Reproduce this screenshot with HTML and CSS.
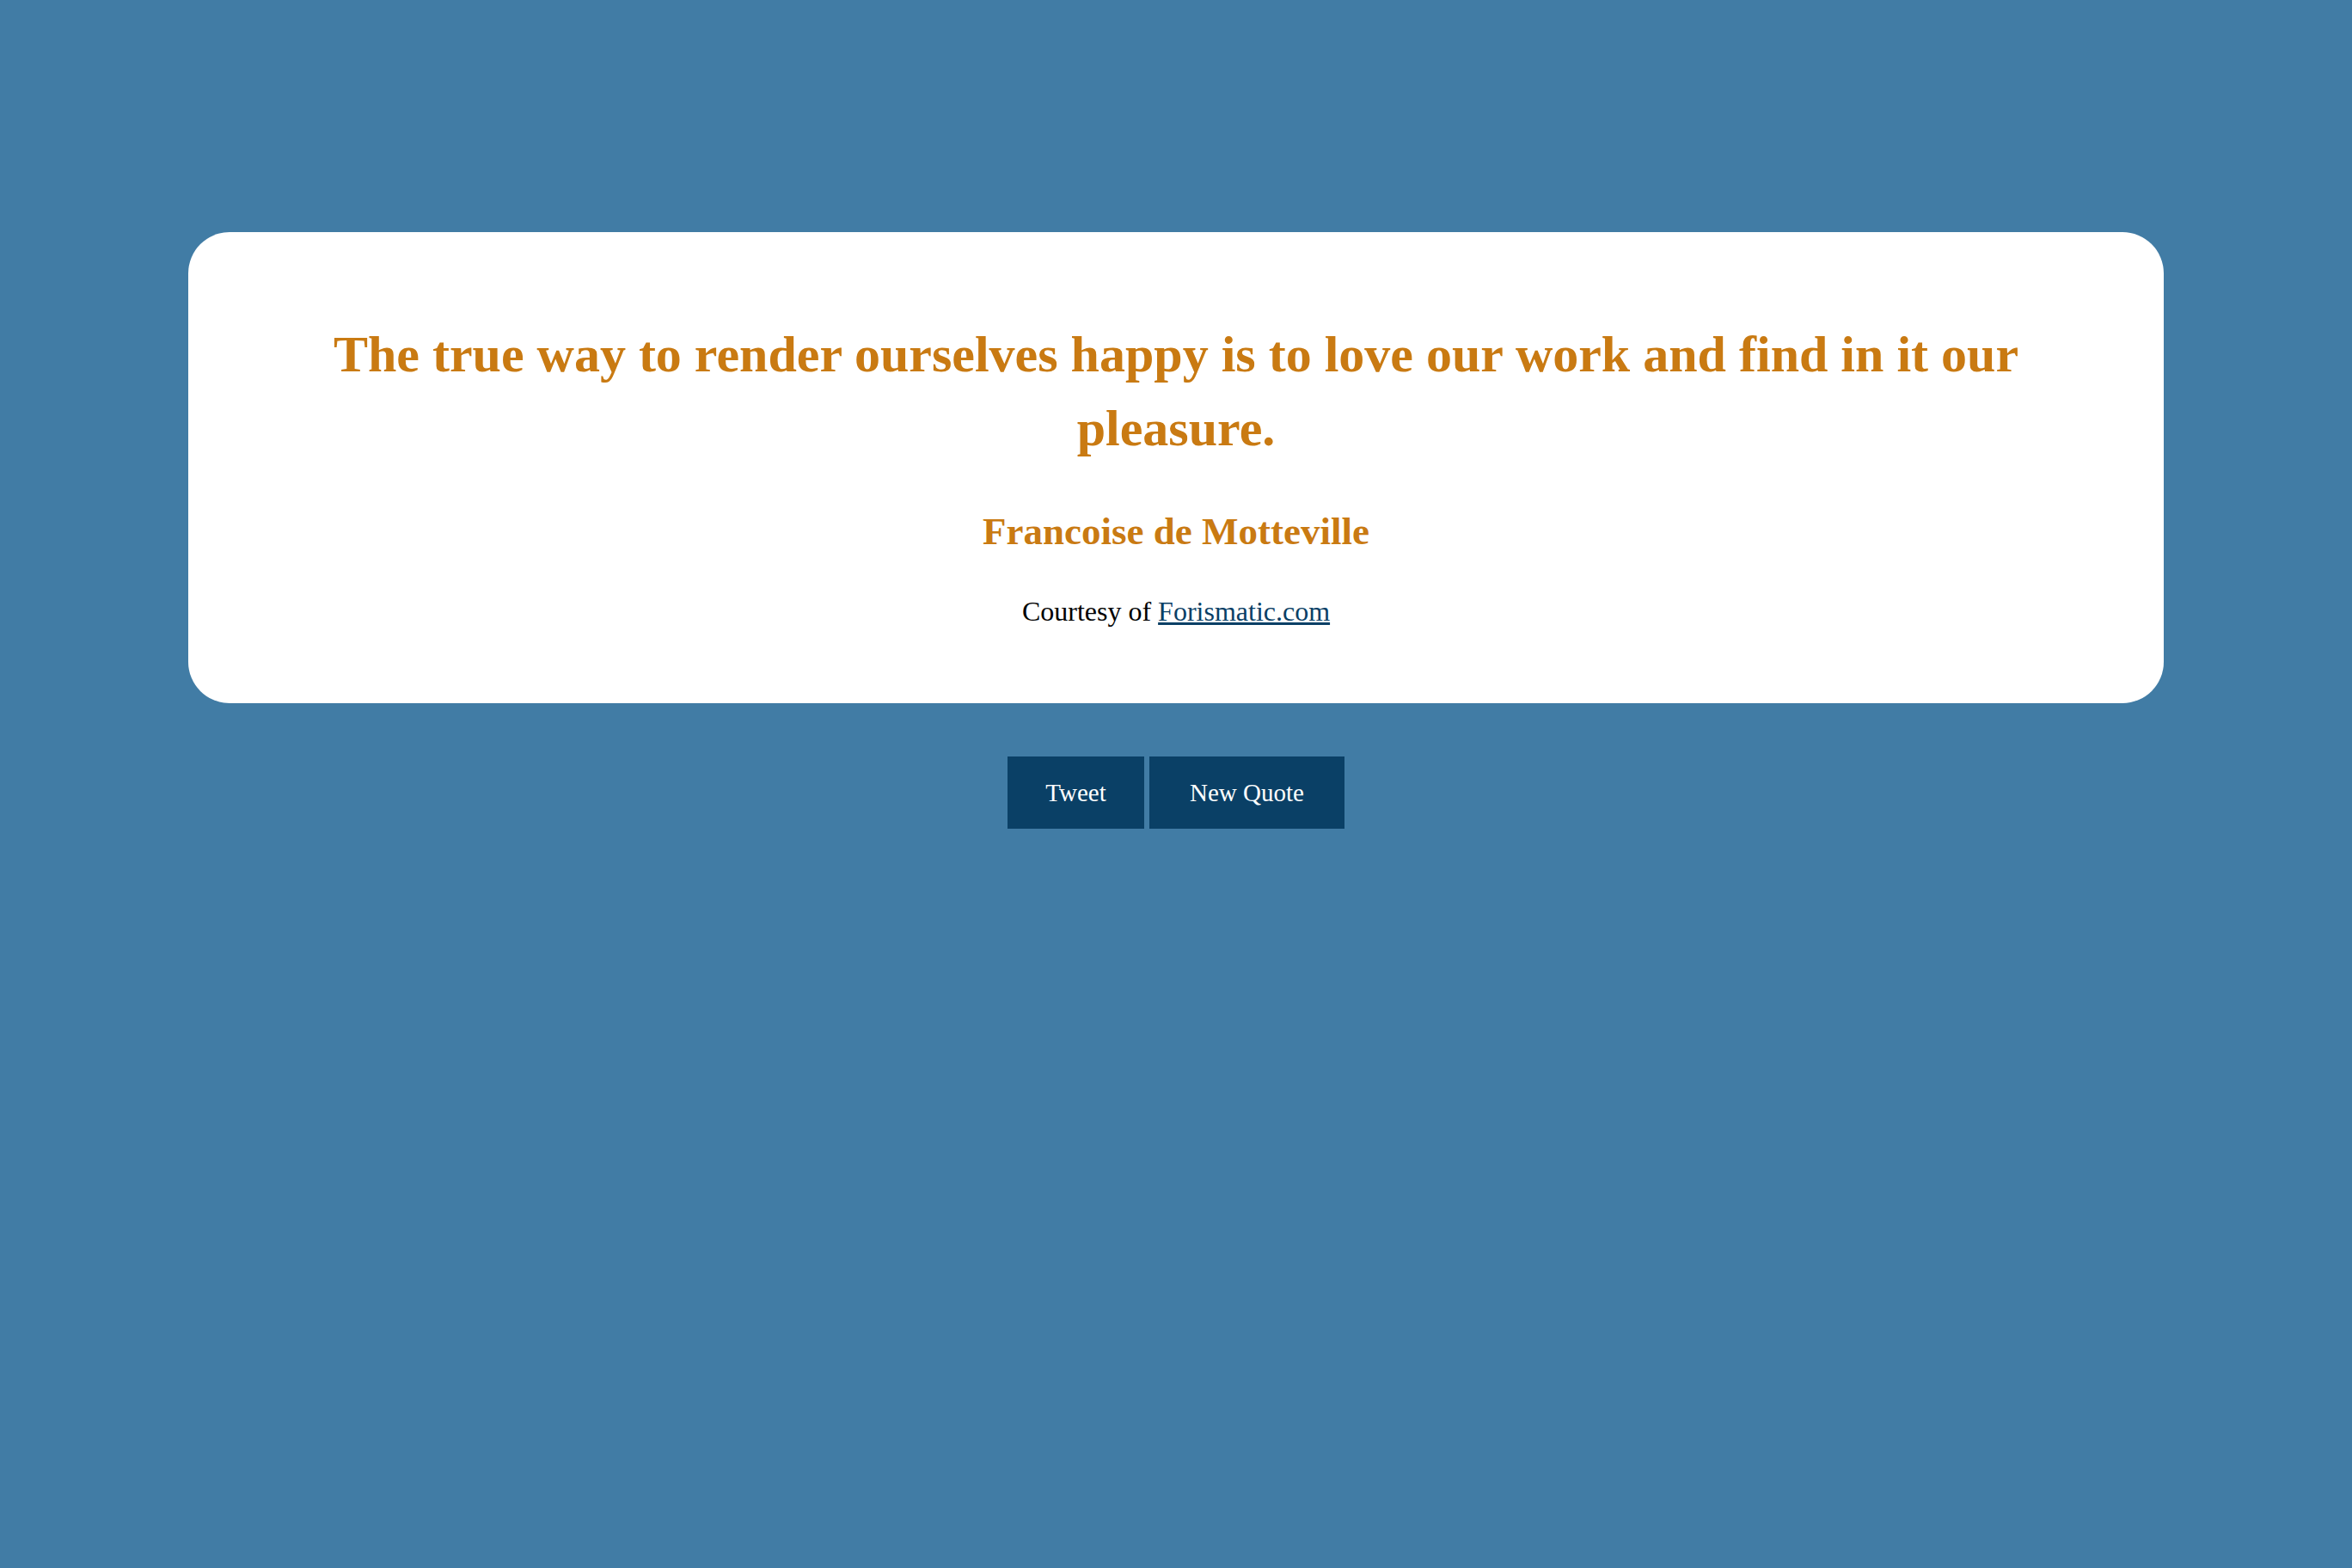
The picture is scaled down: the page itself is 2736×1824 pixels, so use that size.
FILE: index.html
```html
<!DOCTYPE html>
<html lang="en">
<head>
<meta charset="utf-8">
<title>Random Quote Machine</title>
<link rel="stylesheet" href="styles.css">
</head>
<body>
<main class="page">
  <section class="card">
    <h1 class="quote">The true way to render ourselves happy is to love our work and find in it our pleasure.</h1>
    <h2 class="author">Francoise de Motteville</h2>
    <p class="source">Courtesy of <a href="#" class="source-link">Forismatic.com</a></p>
  </section>
  <div class="buttons">
    <button class="btn btn-tweet" type="button">Tweet</button>
    <button class="btn btn-new" type="button">New Quote</button>
  </div>
</main>
</body>
</html>
```
FILE: styles.css
```css
html, body {
  margin: 0;
  padding: 0;
}
body {
  background: #417ca5;
  font-family: "Liberation Serif", "Times New Roman", serif;
  min-height: 100vh;
}
.page {
  padding-top: 270px;
}
.card {
  width: 84%;
  margin: 0 auto;
  box-sizing: border-box;
  background: #ffffff;
  border-radius: 48px;
  padding: 99px 140px 88px;
  text-align: center;
}
.quote {
  margin: 0;
  font-size: 60px;
  line-height: 86px;
  font-weight: bold;
  color: #c97a12;
}
.author {
  margin: 50px 0 0;
  font-size: 45px;
  line-height: 54px;
  font-weight: bold;
  color: #c97a12;
}
.source {
  margin: 47px 0 0;
  font-size: 32px;
  line-height: 38px;
  color: #000000;
}
.source-link {
  color: #0a4066;
}
.buttons {
  display: flex;
  justify-content: center;
  gap: 6px;
  margin-top: 62px;
}
.btn {
  height: 84px;
  padding: 0;
  border: none;
  border-radius: 0;
  background: #0a4066;
  color: #ffffff;
  font-family: "Liberation Serif", "Times New Roman", serif;
  font-size: 29px;
  cursor: pointer;
}
.btn-tweet {
  width: 159px;
}
.btn-new {
  width: 227px;
}
```
